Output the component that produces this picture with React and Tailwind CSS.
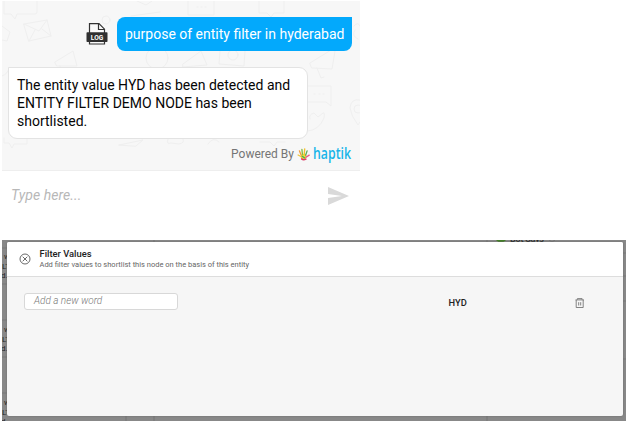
import React from "react";

const INK = "#efefef";

function Doodles() {
  return (
    <svg className="absolute inset-0" width="358" height="169" viewBox="2 1 358 169" fill="none" stroke={INK} strokeWidth="1" strokeLinejoin="round" strokeLinecap="round">
      <path d="M4 1v13h7l4 5 2-5h18q2 0 2-2V1" />
      <path d="M24 24l23-4 4 16-22 5zM24 24l15 7 8-11M29 41l6-11M51 36l-9-7" />
      <path d="M2 26l8 6-3 9-5-1" />
      <circle cx="106" cy="20" r="4" />
      <path d="M55 62l18-11 4 15-20 0zM60 66l2 4M2 76q6-2 7-8" />
      <circle cx="157" cy="58" r="11" />
      <path d="M188 1v14h26V1M197 7h1M201 7h1M205 7h1M131 16l29-4M137 1l9 4 6-4" />
      <path d="M259 1v12h8l4 4 3-4h10V1" />
      <path d="M183 64l18-13 6 14-24 2z" />
      <path d="M220 51l-1 13 25 2 1-15" />
      <circle cx="233" cy="55" r="5" />
      <path d="M310 63l21-13 4 1-3 18-20-1zM317 68l4 10 3-1" />
      <path d="M308 86h23v20l-5-4h-18M314 94h1M319 94h1M323 94h1" />
      <path d="M310 119q-2-4 4-6l4 4 5-4q2-1 1 5-5 12-16 13" />
      <path d="M360 100q-9-2-10 8 1 8 8 17l2-3" />
      <circle cx="358" cy="109" r="4" />
      <path d="M354 26q4-5 6 0M355 30q-4 6 3 9" />
      <path d="M4 138v5h5l3 5 2-4h13v-6" />
      <path d="M119 145l24-5-7 6zM168 139q-2 6 3 4l8 1q6-1 4-5" />
      <path d="M208 144q5-8 11-2M260 142h10l4 4 3-4h8" />
    </svg>
  );
}

function LogIcon() {
  return (
    <svg className="mr-[9px] mt-[5px]" width="22" height="24" viewBox="0 0 22 24">
      <path d="M3.5 22V1.7h9.5l5.5 5.5V22z" fill="#fafafa" stroke="#333" strokeWidth="1.2" />
      <path d="M12.5 1.7v5.8h6" fill="none" stroke="#333" strokeWidth="1.2" />
      <rect x=".5" y="10.2" width="21" height="9.8" rx=".8" fill="#303030" />
      <text x="11" y="17.8" textAnchor="middle" textLength="12.5" lengthAdjust="spacingAndGlyphs" fontFamily="Roboto, sans-serif" fontWeight="700" fontSize="7.8" fill="#fff">LOG</text>
    </svg>
  );
}

function Hand() {
  return (
    <svg width="13" height="13" viewBox="0 0 13 13" fill="none" strokeLinecap="round">
      <path d="M4.4 6.5l3-.7 2.4 2-1.1 3.1-2.8.9-2.1-2.2z" fill="#eedb35" />
      <path d="M4.2 7.2L2.4 2.8" stroke="#f29a38" strokeWidth="1.3" />
      <path d="M5.4 6.3l-.5-5" stroke="#7cb83f" strokeWidth="1.3" />
      <path d="M7.2 6.3l.5-5.3" stroke="#f2c230" strokeWidth="1.4" />
      <path d="M8.6 7.2l1.5-4.3" stroke="#5aab5a" strokeWidth="1.3" />
      <path d="M9 9.3l3.2-2.2" stroke="#e6548c" strokeWidth="1.3" />
      <path d="M4.3 8.8L1.1 7" stroke="#f0c33a" strokeWidth="1.3" />
      <path d="M4.6 10.9q1.8 1.7 4.3.2" stroke="#df3d68" strokeWidth="1.5" />
      <path d="M5.2 8.2l2.2 1.6" stroke="#48aa60" strokeWidth="1.4" />
    </svg>
  );
}

function Chat() {
  return (
    <section className="ml-[2px] mt-px h-[239px] w-[358px] shrink-0">
      <div className="relative h-[169px] overflow-hidden bg-[#f7f7f7]">
        <Doodles />
        <div className="relative flex h-full flex-col pt-4">
          <div className="mr-2 flex justify-end">
            <LogIcon />
            <p className="h-[34px] w-[235px] whitespace-nowrap rounded-[8px] rounded-tr-none bg-[#03a9fc] pl-2 text-[14px] leading-[34px] text-white">purpose of entity filter in hyderabad</p>
          </div>
          <p className="ml-[6px] mt-4 h-[72px] w-[300px] rounded-[9px] rounded-tl-none border border-[#e3e3e3] bg-white pl-2 pt-2 text-[14px] leading-[18px] text-[#050505]">
            The entity value HYD has been detected and ENTITY FILTER DEMO NODE has been shortlisted.
          </p>
          <div className="mr-2 mt-[5px] flex h-5 items-center justify-end">
            <span className="text-[12px] leading-5 text-[#757575]">Powered By</span>
            <span className="ml-[3px] mr-[3px]"><Hand /></span>
            <svg className="overflow-visible" width="39" height="20"><text x="0" y="15" textLength="38" lengthAdjust="spacingAndGlyphs" fontFamily="Open Sans, sans-serif" fontSize="15.5" fontWeight="600" fill="#19b5e9">haptik</text></svg>
          </div>
        </div>
      </div>
      <div className="flex h-[50px] items-center justify-between border-t border-[#eeeeee] bg-white pl-[9px] pr-[11px]">
        <span className="text-[14px] italic tracking-[0.08px] text-[#b8b8b8]">Type here...</span>
        <svg width="21" height="18" viewBox="0 0 21 18"><path d="M0 0l21 9L0 18v-7l14-2L0 7z" fill="#d9d9d9" /></svg>
      </div>
    </section>
  );
}

function Backdrop() {
  return (
    <svg className="absolute inset-0" width="624" height="181" viewBox="2 240 624 181" fontFamily="Roboto, sans-serif">
      <path d="M154 240v181M487 240v181M126 416v5" stroke="#777" fill="none" />
      <path d="M2 248h5M2 284h5M2 320h5M2 357h5M2 393h5M623 253h3M623 276h3M623 301h3M623 359h3" stroke="#797979" />
      <g fontSize="8" fill="#262626">
        <text x="4" y="259">w</text><text x="2" y="268.5">LT</text><text x="1" y="278">d.</text>
        <text x="4" y="332">w</text><text x="2" y="341.5">LT</text><text x="1" y="351">d.</text>
        <text x="4" y="405">w</text><text x="2" y="415">LT</text><text x="1" y="424">d.</text>
      </g>
      <circle cx="501" cy="236.5" r="6" fill="#437f28" />
      <text x="510" y="242" fontSize="9" fontWeight="500" fill="#292929" textLength="34">Bot Says</text>
      <path d="M549 240l3 2 3-2" fill="none" stroke="#777" />
    </svg>
  );
}

function Dialog() {
  return (
    <section className="relative ml-[2px] h-[181px] w-[624px] shrink-0 overflow-hidden bg-[#888888] pl-[5px] pt-[2px]">
      <Backdrop />
      <div className="relative h-[174px] w-[616px] overflow-hidden rounded-[2px] bg-[#f6f6f6] shadow-[0_0_2px_#666]">
        <header className="flex h-[35px] border-b border-[#dddddd] bg-white pl-[11.5px]">
          <svg className="mt-[11px]" width="12" height="12" viewBox="0 0 12 12" fill="none" stroke="#444" strokeWidth=".8"><circle cx="6" cy="6" r="5" /><path d="M3.7 3.7l4.6 4.6M8.3 3.7L3.7 8.3" /></svg>
          <div className="ml-[9px] whitespace-nowrap pt-[6px]">
            <h2 className="text-[9.4px] font-medium leading-[12px] text-[#222]">Filter Values</h2>
            <p className="text-[7.5px] leading-[10px] text-[#666]">Add filter values to shortlist this node on the basis of this entity</p>
          </div>
        </header>
        <div className="flex pl-[17px] pt-4">
          <div className="h-[17px] w-[154px] rounded-[3px] border border-[#d8d8d8] bg-white pl-[9px] text-[10px] font-light italic leading-[13px] text-[#777]">Add a new word</div>
          <span className="ml-[270.5px] mt-px w-6 text-[9.3px] font-medium leading-[18px] text-[#222]">HYD</span>
          <svg className="ml-[102.5px] mt-[5px]" width="10" height="11" viewBox="0 0 10 11" fill="none" stroke="#666" strokeWidth=".8"><path d="M.5 1.9h8.5M2.4 1.6V.6h4.7v1M1.2 2v7.5h7V2M3.7 4.2v3.3M5.7 4.2v3.3" /></svg>
        </div>
      </div>
    </section>
  );
}

export default function App() {
  return (
    <main className="flex h-[423px] w-[627px] flex-col overflow-hidden bg-white font-[Roboto,sans-serif]">
      <Chat />
      <Dialog />
    </main>
  );
}
